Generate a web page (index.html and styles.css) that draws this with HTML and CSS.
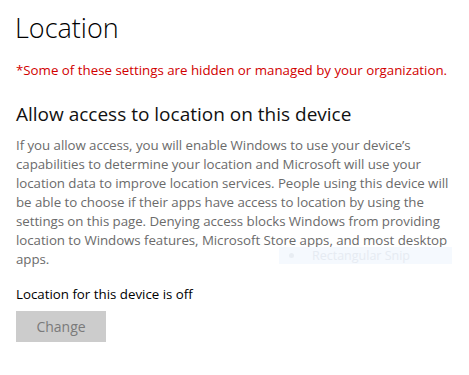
FILE: index.html
```html
<!DOCTYPE html>
<html lang="en">
<head>
    <meta charset="UTF-8">
    <meta name="viewport" content="width=device-width, initial-scale=1.0">
    <title>Location</title>
    <link rel="stylesheet" href="styles.css">
</head>
<body>
    <div class="page">
        <h1 class="title">Location</h1>
        <p class="notice">*Some of these settings are hidden or managed by your organization.</p>

        <h2 class="section-title">Allow access to location on this device</h2>
        <p class="desc">If you allow access, you will enable Windows to use your device’s capabilities to determine your location and Microsoft will use your location data to improve location services. People using this device will be able to choose if their apps have access to location by using the settings on this page. Denying access blocks Windows from providing location to Windows features, Microsoft Store apps, and most desktop apps.</p>

        <p class="status">Location for this device is off</p>
        <button class="btn" disabled>Change</button>

        <div class="snip">
            <span class="snip-dot"></span>
            <span class="snip-label">Rectangular Snip</span>
        </div>
    </div>
</body>
</html>
```

FILE: styles.css
```css
body {
    margin: 0;
    padding: 0;
    background: #ffffff;
    font-family: 'Open Sans', 'Noto Sans', sans-serif;
}
.page {
    position: relative;
    padding: 10px 0 0 16px;
    width: 450px;
}
.title {
    margin: 0 0 0 -1px;
    font-size: 27px;
    font-weight: 300;
    line-height: 36px;
    color: #000;
}
.notice {
    margin: 15px 0 0;
    font-size: 13.3px;
    line-height: 18px;
    color: #d10000;
}
.section-title {
    margin: 22px 0 0;
    font-size: 19px;
    font-weight: 400;
    line-height: 26px;
    color: #111;
}
.desc {
    margin: 9px 0 0;
    font-size: 13.3px;
    letter-spacing: -0.05px;
    line-height: 19px;
    color: #6b6b6b;
}
.status {
    margin: 16px 0 0;
    font-size: 13.3px;
    line-height: 19px;
    color: #000;
}
.btn {
    display: block;
    width: 90px;
    height: 31px;
    margin-top: 7px;
    padding: 0;
    border: none;
    background: #cccccc;
    color: #7a7a7a;
    font-family: inherit;
    font-size: 14px;
}
.snip {
    position: absolute;
    left: 279px;
    top: 247px;
    width: 173px;
    height: 17px;
    background: #f5f9fe;
    display: flex;
    align-items: center;
}
.snip-dot {
    width: 5px;
    height: 5px;
    margin-left: 10px;
    border-radius: 50%;
    background: #e8edf3;
}
.snip-label {
    margin-left: 18px;
    font-size: 12.5px;
    line-height: 15px;
    color: #e6ebf2;
}
```
